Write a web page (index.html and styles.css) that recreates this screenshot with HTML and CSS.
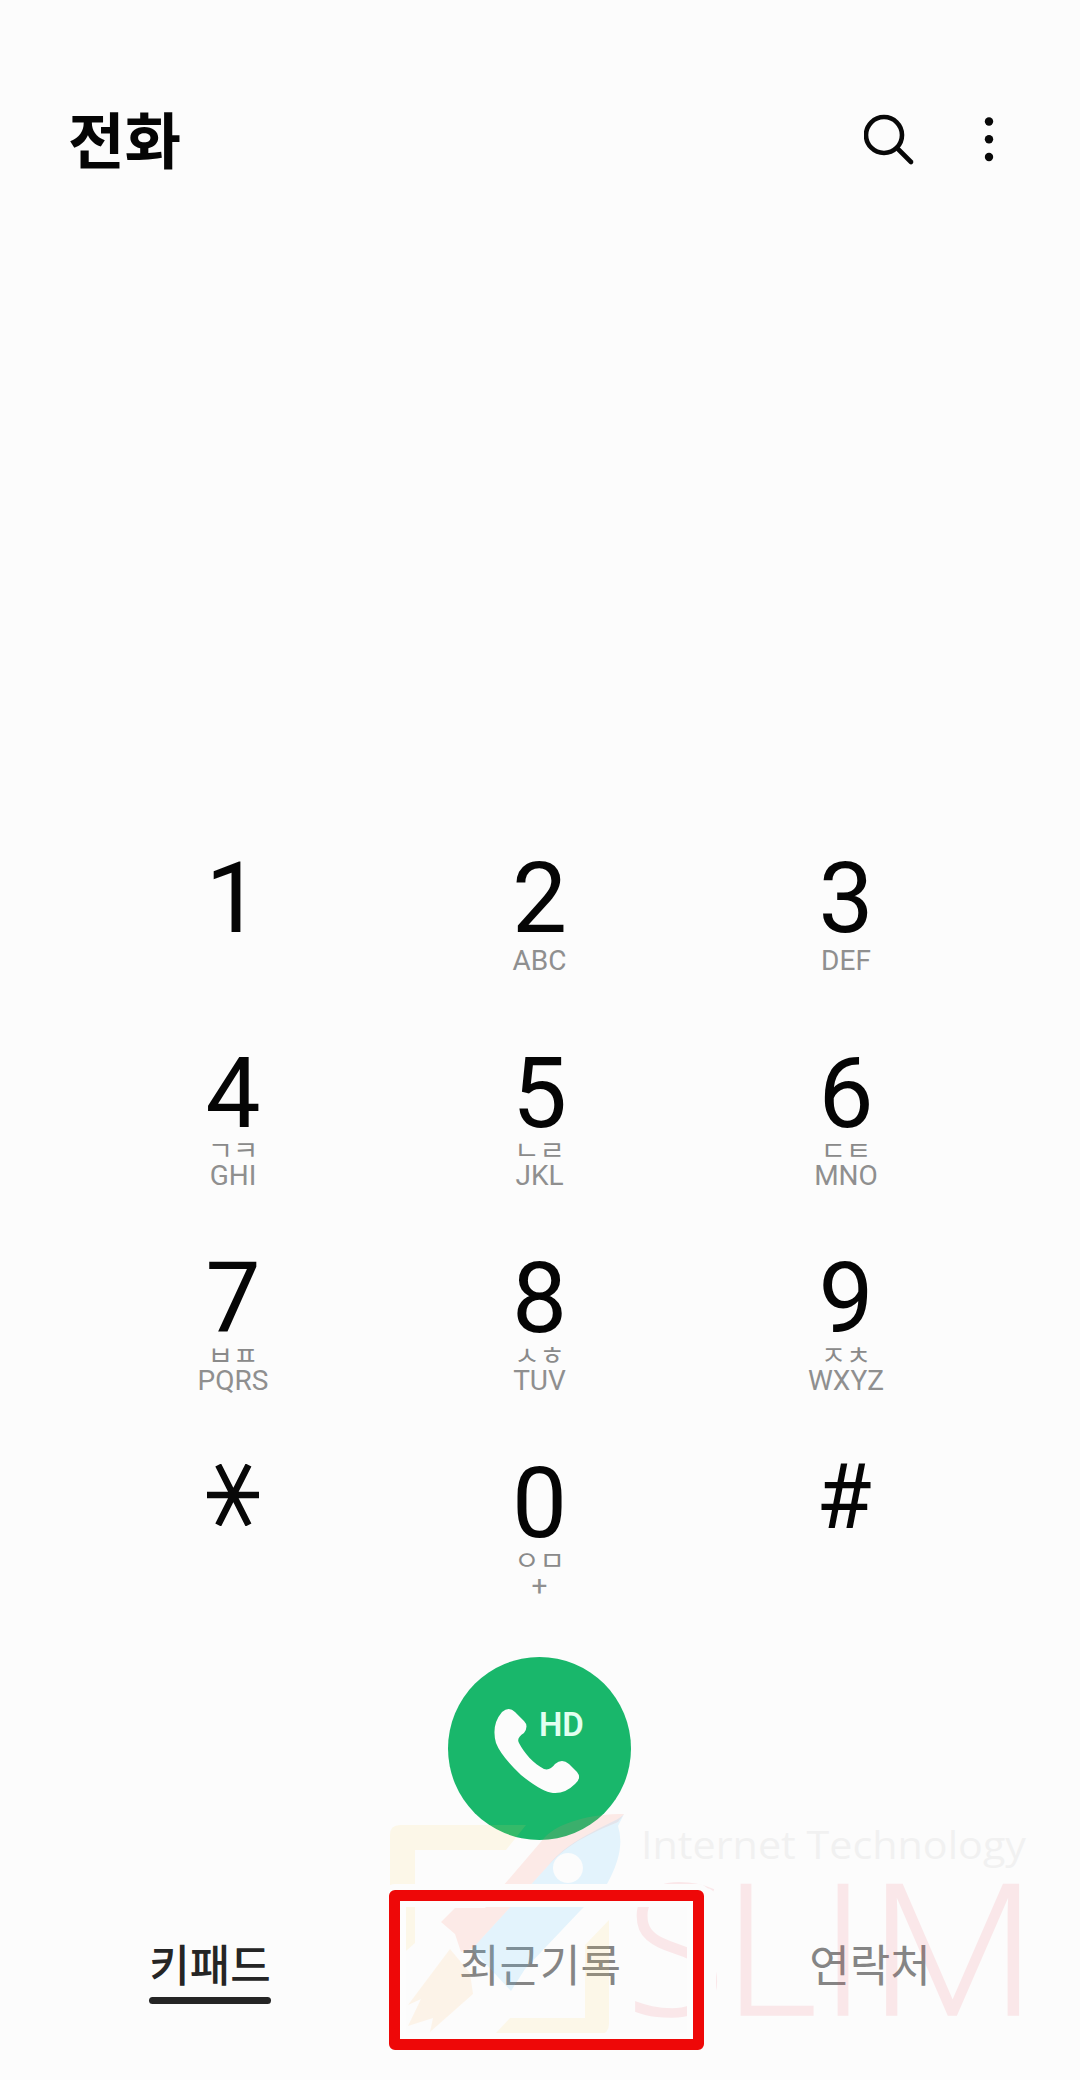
FILE: index.html
```html
<!DOCTYPE html>
<html lang="ko">
<head>
<meta charset="utf-8">
<title>전화</title>
<link rel="stylesheet" href="styles.css">
</head>
<body>
<div class="phone">
  <header class="header">
    <h1 class="title">전화</h1>
    <div class="actions">
      <svg class="icon-search" viewBox="0 0 52 52"><circle cx="20" cy="21" r="18"/><path d="M33 34 47 48"/></svg>
      <svg class="icon-more" viewBox="0 0 10 46"><circle cx="5" cy="4.5" r="4.2"/><circle cx="5" cy="22.2" r="4.2"/><circle cx="5" cy="40" r="4.2"/></svg>
    </div>
  </header>

  <main class="keypad">
    <div class="key"><span class="digit">1</span></div>
    <div class="key"><span class="digit">2</span><span class="latin">ABC</span></div>
    <div class="key"><span class="digit">3</span><span class="latin">DEF</span></div>
    <div class="key"><span class="digit">4</span><span class="jamo">ㄱㅋ</span><span class="latin">GHI</span></div>
    <div class="key"><span class="digit">5</span><span class="jamo">ㄴㄹ</span><span class="latin">JKL</span></div>
    <div class="key"><span class="digit">6</span><span class="jamo">ㄷㅌ</span><span class="latin">MNO</span></div>
    <div class="key"><span class="digit">7</span><span class="jamo">ㅂㅍ</span><span class="latin">PQRS</span></div>
    <div class="key"><span class="digit">8</span><span class="jamo">ㅅㅎ</span><span class="latin">TUV</span></div>
    <div class="key"><span class="digit">9</span><span class="jamo">ㅈㅊ</span><span class="latin">WXYZ</span></div>
    <div class="key">
      <svg class="star" viewBox="0 0 52 62"><path d="M0 31H52M11.2 1 41.5 61M41.5 1 11.2 61"/></svg>
    </div>
    <div class="key"><span class="digit">0</span><span class="jamo">ㅇㅁ</span><span class="latin">+</span></div>
    <div class="key"><span class="hash">#</span></div>
  </main>

  <div class="call-row">
    <button class="call" aria-label="HD 통화">
      <svg class="call-icon" viewBox="0 0 183 183">
        <path d="M54 55Q61 49 67 55L76 64Q81 69 76 76Q68 81 71 86C76 96 86 107 96 112Q102 114 107 107Q114 101 121 107L129 115Q134 121 127 127Q117 137 105 136Q94 135 73 118Q53 99 48 86Q43 68 54 55Z"/>
        <text x="91" y="79">HD</text>
      </svg>
    </button>
  </div>

  <nav class="tabs">
    <span class="tab tab-active">키패드</span>
    <span class="tab">최근기록</span>
    <span class="tab">연락처</span>
  </nav>

  <svg class="watermark" viewBox="380 1800 700 280">
    <path class="wm-yellow" d="M390 1835Q390 1825 400 1825H526L506 1850H415V1943L390 1965Z"/>
    <path class="wm-yellow" d="M609 1920V2024Q609 2034 599 2034H495L510 2018H585V1945Z"/>
    <path class="wm-orange" d="M450 1949 470 1973 473 1994 430 2032 433 2018 408 2026 421 1999 408 2005Z"/>
    <path class="wm-coral" d="M624 1814C590 1814 560 1822 545 1837L497 1893 485 1908H455L441 1922 455 1934 461 1952 472 1949 547 1867C570 1840 600 1830 618 1822Z"/>
    <path class="wm-blue" fill-rule="evenodd" d="M624 1814C620 1822 570 1836 547 1867L472 1949 511 1991 525 1969 579 1912 607 1884Q626 1850 618 1826ZM568 1853A15 15 0 1 1 567.9 1853Z"/>
    <text class="wm-tag" x="641" y="1859" textLength="385" lengthAdjust="spacingAndGlyphs">Internet Technology</text>
    <text class="wm-name" x="626 723 820" y="2015">SLI</text>
    <text class="wm-name" transform="translate(867 2015) scale(1.085 1)">M</text>
  </svg>
  <div class="highlight"></div>
</div>
</body>
</html>
```
FILE: styles.css
```css
* { box-sizing: border-box; }

body { margin: 0; background: #fcfcfc; }

.phone {
  position: relative;
  display: flex;
  flex-direction: column;
  width: 1080px;
  height: 2080px;
  overflow: hidden;
  background: #fcfcfc;
  color: #050505;
  font-family: Roboto, "Noto Sans CJK KR", sans-serif;
}

.header {
  display: flex;
  justify-content: space-between;
  align-items: center;
  height: 279px;
  padding: 0 86px 0 68px;
}

.title {
  margin: 0;
  padding-bottom: 3px;
  font: 700 61.5px/80px "Noto Sans CJK KR", sans-serif;
}

.actions { display: flex; align-items: center; gap: 68px; }
.icon-search { width: 52px; height: 52px; fill: none; stroke: #080808; stroke-width: 4.6; stroke-linecap: round; }
.icon-more { width: 10px; height: 46px; fill: #080808; }

.keypad {
  display: grid;
  grid-template-columns: repeat(3, 306.5px);
  grid-template-rows: 195px 205px 205px 205px;
  justify-content: center;
  padding: 572px 1px 0 0;
  height: 1378px;
}

.key { display: flex; flex-direction: column; align-items: center; }
.digit { font-size: 98px; line-height: 96px; }
.latin { font-size: 28px; line-height: 28px; font-weight: 400; color: #8f8f8f; }
.jamo {
  height: 20px;
  font: 400 27.5px/12px "Noto Sans CJK KR", sans-serif;
  color: #8a8a8a;
  transform: scaleY(.95);
}
.star { width: 52px; height: 62px; margin-top: 8px; fill: none; stroke: #080808; stroke-width: 6.5; }
.hash { font-size: 90px; line-height: 84px; padding-right: 4px; }

.call-row { display: flex; justify-content: center; padding-right: 1px; }
.call { width: 183px; height: 183px; padding: 0; border: 0; border-radius: 50%; background: #19b76b; }
.call-icon { display: block; fill: #fcfcfc; }
.call-icon text { font: 600 33px Roboto, sans-serif; fill: #e2fff0; }

.tabs {
  display: grid;
  grid-template-columns: 330px 330px 330px;
  justify-content: center;
  justify-items: center;
  padding-top: 91px;
}
.tab {
  height: 73px;
  font: 400 44px/64px "Noto Sans CJK KR", sans-serif;
  color: #858585;
}
.tab-active { font-weight: 500; color: #252525; }
.tab-active::after { content: ""; display: block; height: 7px; margin-top: 2px; border-radius: 4px; background: #252525; }

.watermark { position: absolute; left: 380px; top: 1800px; width: 700px; height: 280px; }
.wm-yellow { fill: #ffd85a; opacity: .12; }
.wm-orange { fill: #ffbd73; opacity: .14; }
.wm-coral { fill: #ff8575; opacity: .15; }
.wm-blue { fill: #62c9ff; opacity: .16; }
.wm-tag { font: 400 39px "Open Sans", sans-serif; fill: #777; opacity: .08; }
.wm-name { font: 300 183px "Open Sans", sans-serif; fill: #f04858; stroke: #f04858; stroke-width: 1.5px; opacity: .11; }

.highlight {
  position: absolute;
  left: 389px;
  top: 1890px;
  width: 315px;
  height: 160px;
  border: 11px solid #ee0808;
  border-radius: 6px;
  box-shadow: 0 0 0 6px #fcfcfc, 8px 2px 0 4px #fcfcfc, inset 0 0 0 6px #fdfdfd;
}
```
